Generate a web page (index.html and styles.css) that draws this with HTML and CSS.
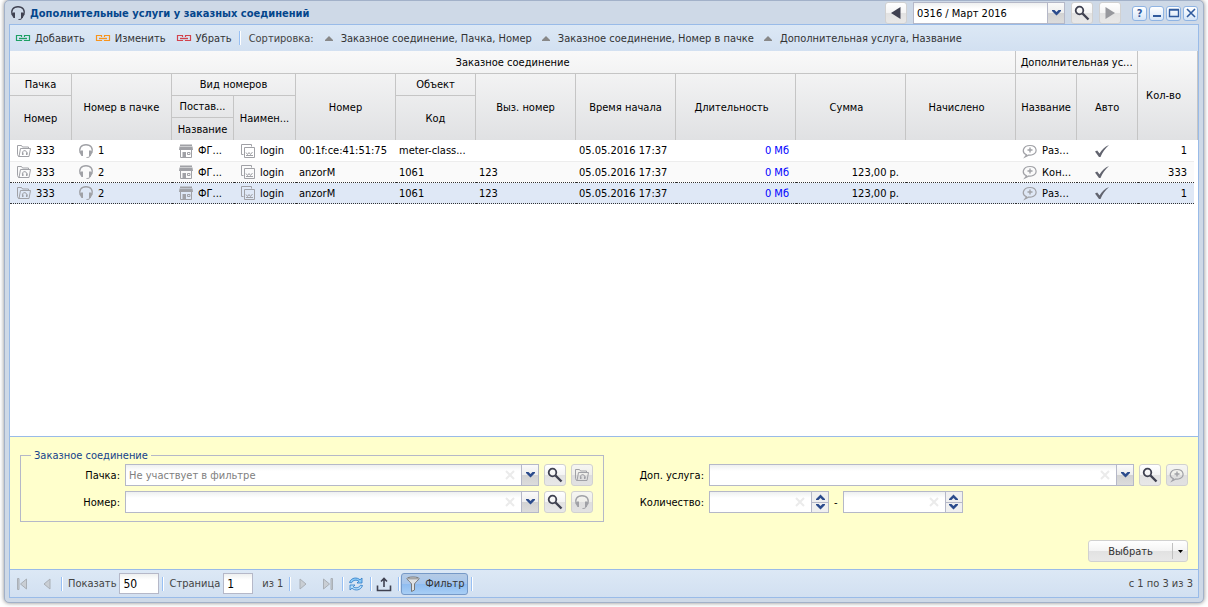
FILE: index.html
```html
<!DOCTYPE html>
<html lang="ru">
<head>
    <meta charset="UTF-8">
    <meta name="viewport" content="width=device-width, initial-scale=1.0">
    <title>Дополнительные услуги у заказных соединений</title>
    <link rel="stylesheet" href="styles.css">
</head>
<body>
    <svg class="sprite" width="0" height="0" aria-hidden="true">
        <symbol id="headset" viewBox="0 0 16 16">
            <path d="M2.500 10C.5 5.500 3 1.800 8 1.800S15.500 5.500 13.500 10" fill="none" stroke="currentColor" stroke-width="1.400"/>
            <path d="M3 7.500h2V13H3.500L1.500 9.500zM13 7.500h-2V13h1.500l2-3.500z" fill="currentColor"/>
            <path d="M12.500 12c-.5 2.200-2 2.500-4 2.500" fill="none" stroke="currentColor"/>
        </symbol>
        <symbol id="folder" viewBox="0 0 16 16">
            <path d="M3 13.500h-.5l-1-2v-9h4l1 1.500h6v1.500M3 13.500h10l1.500-8H4.500z" fill="none" stroke="currentColor"/>
            <path d="M6.500 11C5.500 6.500 11.500 6.500 11 11" fill="none" stroke="currentColor"/>
            <path d="M6 9.500h1.500V12H6zM10 9.500h1.500V12H10z" fill="currentColor"/>
        </symbol>
        <symbol id="shop" viewBox="0 0 16 16">
            <path d="M2 1.500h12V3H2zM1.500 3.500h13l.5 3.500H1z" fill="currentColor"/>
            <path d="M2.500 7v7.500h11V7" fill="none" stroke="currentColor"/>
            <path d="M4.500 9H8v5.500H4.500z" fill="currentColor"/>
            <path d="M9.500 9.500H12v2H9.500z" fill="none" stroke="currentColor"/>
        </symbol>
        <symbol id="pages" viewBox="0 0 16 16">
            <path d="M3.500 11.500h-2v-10h10v2M4.500 4.500h10v10h-10z" fill="none" stroke="currentColor"/>
            <path d="M6 9.500l1.500 2 1.500-2 1.500 2L12.500 9M6 12.500h7" fill="none" stroke="currentColor"/>
        </symbol>
        <symbol id="bubble" viewBox="0 0 16 16">
            <path d="M4.500 11.800C-1 9.500 1 2.500 8 2.500s8.500 7.500 1.500 9.500c-1.500.3-2.500 0-2.500 0L3 14z" fill="none" stroke="currentColor" stroke-width="1.200"/>
            <path d="M8 4.500v5M5.500 7h5" stroke="currentColor" stroke-width="1.400"/>
        </symbol>
        <symbol id="check" viewBox="0 0 16 16">
            <path d="M1 8.500l2.200-1 2.300 3C8 6.500 10.500 4 15 2 11 5.500 8.500 9 6.500 14H5z" fill="currentColor"/>
        </symbol>
        <symbol id="search" viewBox="0 0 16 16">
            <circle cx="5.500" cy="5.500" r="3.800" fill="none" stroke="currentColor" stroke-width="1.800"/>
            <path d="M8.500 8.500l6 6" stroke="currentColor" stroke-width="2.400"/>
        </symbol>
        <symbol id="chain" viewBox="0 0 16 16">
            <path d="M6.500 7V5.500h-5v5h5V10M9.500 7V5.500h5v5h-5V10" fill="none" stroke="currentColor" stroke-width="1.200"/>
            <path d="M4 8.500h8" stroke="currentColor" stroke-width="1.400"/>
        </symbol>
        <symbol id="chevron" viewBox="0 0 9 6">
            <path d="M0 0h2.500l2 2 2-2H9v1L4.500 5.500 0 1z" fill="#2b4b8c"/>
        </symbol>
        <symbol id="sort" viewBox="0 0 8 5">
            <path d="M4 0l4 4v1H0V4z" fill="#888"/>
        </symbol>
        <symbol id="clear" viewBox="0 0 10 10">
            <path d="M1 1l8 8M9 1L1 9" stroke="#ebebeb" stroke-width="2"/>
        </symbol>
        <symbol id="step" viewBox="0 0 16 16">
            <path d="M11 3v10L5 8z" fill="#c9ced4" stroke="#a9afb6"/>
        </symbol>
        <symbol id="edge" viewBox="0 0 16 16">
            <path d="M12.500 3v10L6.500 8zM3.500 2.500h1.500v11H3.500z" fill="#c9ced4" stroke="#a9afb6"/>
        </symbol>
    </svg>

    <main class="window">
        <header class="titlebar">
            <svg class="icon dark"><use href="#headset"/></svg>
            <h1>Дополнительные услуги у заказных соединений</h1>
            <div class="period">
                <button class="btn" aria-label="Предыдущий период"><svg class="icon" viewBox="0 0 16 16"><path d="M12.500 2v12L3 8z" fill="#3f4150"/></svg></button>
                <div class="combo">
                    <input type="text" value="0316 / Март 2016" aria-label="Период">
                    <button class="trigger" aria-label="Открыть список"><svg class="chevron"><use href="#chevron"/></svg></button>
                </div>
                <button class="btn" aria-label="Найти период"><svg class="icon dark"><use href="#search"/></svg></button>
                <button class="btn" aria-label="Следующий период"><svg class="icon" viewBox="0 0 16 16"><path d="M3.500 2v12L13 8z" fill="#97989d"/></svg></button>
            </div>
            <div class="tools">
                <button class="tool" aria-label="Справка">?</button>
                <button class="tool" aria-label="Свернуть"><svg viewBox="0 0 12 12"><path d="M2 8h8v2H2z" fill="#2f5a9d"/></svg></button>
                <button class="tool" aria-label="Развернуть"><svg viewBox="0 0 12 12"><path d="M1.500 3h9v6.500h-9zM1 2.500h10" fill="none" stroke="#2f5a9d" stroke-width="1.400"/></svg></button>
                <button class="tool" aria-label="Закрыть"><svg viewBox="0 0 12 12"><path d="M2 2l8 8M10 2l-8 8" stroke="#2f5a9d" stroke-width="1.600"/></svg></button>
            </div>
        </header>

        <div class="content">
            <div class="toolbar">
                <button class="action"><svg class="icon green"><use href="#chain"/></svg>Добавить</button>
                <button class="action"><svg class="icon orange"><use href="#chain"/></svg>Изменить</button>
                <button class="action"><svg class="icon red"><use href="#chain"/></svg>Убрать</button>
                <span class="sep"></span>
                <span class="caption">Сортировка:</span>
                <button class="sort"><svg><use href="#sort"/></svg>Заказное соединение, Пачка, Номер</button>
                <button class="sort"><svg><use href="#sort"/></svg>Заказное соединение, Номер в пачке</button>
                <button class="sort"><svg><use href="#sort"/></svg>Дополнительная услуга, Название</button>
            </div>

            <div class="grid">
                <table>
                    <colgroup>
                        <col class="w62"><col class="w100"><col class="w62"><col class="w62"><col class="w100"><col class="w80"><col class="w100">
                        <col class="w100"><col class="w120"><col class="w110"><col class="w110"><col class="w61"><col class="w61"><col><col class="w4">
                    </colgroup>
                    <thead>
                        <tr>
                            <th colspan="11">Заказное соединение</th>
                            <th colspan="2">Дополнительная ус...</th>
                            <th class="last" colspan="2" rowspan="4">Кол-во</th>
                        </tr>
                        <tr>
                            <th>Пачка</th>
                            <th rowspan="3">Номер в пачке</th>
                            <th colspan="2">Вид номеров</th>
                            <th rowspan="3">Номер</th>
                            <th>Объект</th>
                            <th rowspan="3">Выз. номер</th>
                            <th rowspan="3">Время начала</th>
                            <th class="near" rowspan="3">Длительность</th>
                            <th class="near" rowspan="3">Сумма</th>
                            <th class="near" rowspan="3">Начислено</th>
                            <th rowspan="3">Название</th>
                            <th rowspan="3">Авто</th>
                        </tr>
                        <tr>
                            <th rowspan="2">Номер</th>
                            <th>Постав...</th>
                            <th rowspan="2">Наимен...</th>
                            <th rowspan="2">Код</th>
                        </tr>
                        <tr>
                            <th>Название</th>
                        </tr>
                    </thead>
                    <tbody>
                        <tr>
                            <td><span class="item"><svg class="icon"><use href="#folder"/></svg>333</span></td>
                            <td><span class="item"><svg class="icon"><use href="#headset"/></svg>1</span></td>
                            <td><span class="item"><svg class="icon"><use href="#shop"/></svg>ФГ...</span></td>
                            <td><span class="item"><svg class="icon"><use href="#pages"/></svg>login</span></td>
                            <td>00:1f:ce:41:51:75</td>
                            <td>meter-class...</td>
                            <td></td>
                            <td>05.05.2016 17:37</td>
                            <td class="num"><a href="#">0 Мб</a></td>
                            <td class="num"></td>
                            <td></td>
                            <td><span class="item"><svg class="icon"><use href="#bubble"/></svg>Раз...</span></td>
                            <td class="auto"><svg class="icon"><use href="#check"/></svg></td>
                            <td class="num">1</td>
                            <td class="filler"></td>
                        </tr>
                        <tr class="alt">
                            <td><span class="item"><svg class="icon"><use href="#folder"/></svg>333</span></td>
                            <td><span class="item"><svg class="icon"><use href="#headset"/></svg>2</span></td>
                            <td><span class="item"><svg class="icon"><use href="#shop"/></svg>ФГ...</span></td>
                            <td><span class="item"><svg class="icon"><use href="#pages"/></svg>login</span></td>
                            <td>anzorM</td>
                            <td>1061</td>
                            <td>123</td>
                            <td>05.05.2016 17:37</td>
                            <td class="num"><a href="#">0 Мб</a></td>
                            <td class="num">123,00 р.</td>
                            <td></td>
                            <td><span class="item"><svg class="icon"><use href="#bubble"/></svg>Кон...</span></td>
                            <td class="auto"><svg class="icon"><use href="#check"/></svg></td>
                            <td class="num">333</td>
                            <td class="filler"></td>
                        </tr>
                        <tr class="selected">
                            <td><span class="item"><svg class="icon"><use href="#folder"/></svg>333</span></td>
                            <td><span class="item"><svg class="icon"><use href="#headset"/></svg>2</span></td>
                            <td><span class="item"><svg class="icon"><use href="#shop"/></svg>ФГ...</span></td>
                            <td><span class="item"><svg class="icon"><use href="#pages"/></svg>login</span></td>
                            <td>anzorM</td>
                            <td>1061</td>
                            <td>123</td>
                            <td>05.05.2016 17:37</td>
                            <td class="num"><a href="#">0 Мб</a></td>
                            <td class="num">123,00 р.</td>
                            <td></td>
                            <td><span class="item"><svg class="icon"><use href="#bubble"/></svg>Раз...</span></td>
                            <td class="auto"><svg class="icon"><use href="#check"/></svg></td>
                            <td class="num">1</td>
                            <td class="filler"></td>
                        </tr>
                    </tbody>
                </table>
            </div>

            <form class="filter">
                <div class="columns">
                    <fieldset>
                        <legend>Заказное соединение</legend>
                        <div class="field">
                            <label for="pack">Пачка:</label>
                            <div class="combo">
                                <input type="text" id="pack" placeholder="Не участвует в фильтре">
                                <svg class="clear"><use href="#clear"/></svg>
                                <button type="button" class="trigger" aria-label="Открыть список"><svg class="chevron"><use href="#chevron"/></svg></button>
                            </div>
                            <button type="button" class="btn" aria-label="Найти"><svg class="icon dark"><use href="#search"/></svg></button>
                            <button type="button" class="btn off" aria-label="Открыть пачку"><svg class="icon"><use href="#folder"/></svg></button>
                        </div>
                        <div class="field">
                            <label for="number">Номер:</label>
                            <div class="combo">
                                <input type="text" id="number">
                                <svg class="clear"><use href="#clear"/></svg>
                                <button type="button" class="trigger" aria-label="Открыть список"><svg class="chevron"><use href="#chevron"/></svg></button>
                            </div>
                            <button type="button" class="btn" aria-label="Найти"><svg class="icon dark"><use href="#search"/></svg></button>
                            <button type="button" class="btn off" aria-label="Открыть номер"><svg class="icon"><use href="#headset"/></svg></button>
                        </div>
                    </fieldset>
                    <div class="side">
                        <div class="field">
                            <label for="service">Доп. услуга:</label>
                            <div class="combo">
                                <input type="text" id="service">
                                <svg class="clear"><use href="#clear"/></svg>
                                <button type="button" class="trigger" aria-label="Открыть список"><svg class="chevron"><use href="#chevron"/></svg></button>
                            </div>
                            <button type="button" class="btn" aria-label="Найти"><svg class="icon dark"><use href="#search"/></svg></button>
                            <button type="button" class="btn off" aria-label="Открыть услугу"><svg class="icon"><use href="#bubble"/></svg></button>
                        </div>
                        <div class="field">
                            <label for="from">Количество:</label>
                            <div class="combo spinner">
                                <input type="text" id="from">
                                <svg class="clear"><use href="#clear"/></svg>
                                <div class="steps">
                                    <button type="button" aria-label="Больше"><svg class="chevron up"><use href="#chevron"/></svg></button>
                                    <button type="button" aria-label="Меньше"><svg class="chevron"><use href="#chevron"/></svg></button>
                                </div>
                            </div>
                            <span>-</span>
                            <div class="combo spinner">
                                <input type="text" aria-label="Количество до">
                                <svg class="clear"><use href="#clear"/></svg>
                                <div class="steps">
                                    <button type="button" aria-label="Больше"><svg class="chevron up"><use href="#chevron"/></svg></button>
                                    <button type="button" aria-label="Меньше"><svg class="chevron"><use href="#chevron"/></svg></button>
                                </div>
                            </div>
                        </div>
                    </div>
                </div>
                <div class="split">
                    <button type="button" class="choose">Выбрать</button>
                    <button type="button" class="more" aria-label="Ещё"><svg viewBox="0 0 5 3"><path d="M0 0h5L2.500 3z"/></svg></button>
                </div>
            </form>

            <footer class="paging">
                <button class="page" aria-label="Первая"><svg class="icon"><use href="#edge"/></svg></button>
                <button class="page" aria-label="Предыдущая"><svg class="icon"><use href="#step"/></svg></button>
                <span class="sep"></span>
                <label for="limit">Показать</label>
                <input class="limit" type="text" id="limit" value="50">
                <span class="sep"></span>
                <label for="page">Страница</label>
                <input class="number" type="text" id="page" value="1">
                <span class="total">из 1</span>
                <span class="sep"></span>
                <button class="page" aria-label="Следующая"><svg class="icon flip"><use href="#step"/></svg></button>
                <button class="page" aria-label="Последняя"><svg class="icon flip"><use href="#edge"/></svg></button>
                <span class="sep"></span>
                <button class="page" aria-label="Обновить">
                    <svg class="icon" viewBox="0 0 16 16">
                        <path d="M1.500 6.500C3 1.500 9 .8 12 3.800L14 2v5H9l1.800-1.800C8.500 3.500 5 4 3.500 6.800z" fill="#8ccaf6" stroke="#2a78c6" stroke-width=".8"/>
                        <path d="M14.500 9.500C13 14.500 7 15.200 4 12.200L2 14V9h5l-1.800 1.800C7.500 12.500 11 12 12.500 9.200z" fill="#b5defa" stroke="#2a78c6" stroke-width=".8"/>
                    </svg>
                </button>
                <span class="sep"></span>
                <button class="page" aria-label="Экспорт">
                    <svg class="icon" viewBox="0 0 16 16"><path d="M1.500 9.500v5h13v-5M8 11V3M5 5.500l3-3 3 3" fill="none" stroke="#3f4150" stroke-width="1.600"/></svg>
                </button>
                <span class="sep"></span>
                <button class="toggle">
                    <svg class="icon" viewBox="0 0 16 16"><path d="M2 2.500c0-2 12-2 12 0C14 4 9.800 6.500 9.500 8v6l-3 1.500V8C6.200 6.500 2 4 2 2.500z" fill="#dfe2e4" stroke="#777"/><path d="M3 2.800h10" stroke="#8a8a8a"/></svg>Фильтр
                </button>
                <span class="sep"></span>
                <span class="range">с 1 по 3 из 3</span>
            </footer>
        </div>
    </main>
</body>
</html>
```
FILE: styles.css
```css
* {
    box-sizing: border-box;
}
body {
    margin: 0;
    padding: 0 4px 4px;
    min-height: 100vh;
    display: flex;
    background: #fff;
    color: #000;
    font-family: "DejaVu Sans Condensed", "Noto Sans", sans-serif;
    font-size: 11px;
    line-height: 13px;
}
button, input {
    font: inherit;
    color: inherit;
    margin: 0;
}
button {
    display: flex;
    align-items: center;
    justify-content: center;
    padding: 0;
    border: 0;
    background: none;
    white-space: nowrap;
}
svg {
    flex: none;
}
.sprite {
    position: absolute;
}
.icon {
    width: 16px;
    height: 16px;
}
.dark {
    color: #3f4150;
}
.green {
    color: #1fa065;
}
.orange {
    color: #f7941d;
}
.red {
    color: #d2434d;
}

/* window */
.window {
    flex: 1;
    min-width: 0;
    display: flex;
    flex-direction: column;
    padding: 0 4px 4px;
    border: 1px solid #a2b1c9;
    border-radius: 5px;
    background: #ced9e7;
    box-shadow: 0 0 4px #888;
}
.titlebar {
    display: flex;
    align-items: center;
    height: 23px;
    padding: 1px 1px 0;
}
h1 {
    flex: 1;
    margin: 0 0 0 4px;
    color: #04468c;
    font-size: 11px;
    font-weight: bold;
}
.period {
    display: flex;
    gap: 6px;
}
.period .combo {
    width: 152px;
}
.tools {
    display: flex;
    gap: 2px;
    margin-left: 11px;
}
.tool {
    width: 15px;
    height: 15px;
    border: 1px solid #8fb4e3;
    border-radius: 3px;
    background: linear-gradient(#fff, #d5e5f8);
    color: #2f5a9d;
    font-weight: bold;
}
.tool svg {
    width: 12px;
    height: 12px;
}
.content {
    flex: 1;
    display: flex;
    flex-direction: column;
    border: 1px solid #99bbe8;
    background: #fff;
}

/* buttons and fields */
.btn {
    flex: none;
    width: 22px;
    height: 22px;
    border: 1px solid #d1d1d1;
    border-radius: 3px;
    background: linear-gradient(#fff, #f4f4f4 50%, #e2e2e2 50%, #e8e8e8);
    color: #3f4150;
}
.btn.off {
    color: #a0a1a6;
    background: linear-gradient(#f6f6f2, #eeeeea 50%, #dedede 50%, #e2e2e2);
}
.combo {
    flex: 1;
    display: flex;
    align-items: center;
    height: 22px;
    border: 1px solid #b5b8c8;
    background: linear-gradient(#eef0f0, #fff 6px);
}
.combo input {
    flex: 1;
    min-width: 0;
    height: 20px;
    padding: 0 3px;
    border: 0;
    background: none;
}
.combo input::placeholder {
    color: #808080;
    opacity: 1;
}
.clear {
    width: 10px;
    height: 10px;
    margin-right: 6px;
}
.trigger {
    width: 17px;
    height: 20px;
    border-left: 1px solid #b5b8c8;
    background: linear-gradient(#fafafa, #eee 50%, #d2d2d2 50%, #dcdcdc);
}
.chevron {
    width: 9px;
    height: 6px;
}
.up {
    transform: rotate(180deg);
}
.spinner {
    flex: none;
    width: 120px;
}
.steps {
    display: flex;
    flex-direction: column;
    width: 17px;
    height: 20px;
    border-left: 1px solid #b5b8c8;
    background: #f0f0f0;
}
.steps button {
    flex: 1;
}
.steps button + button {
    border-top: 1px solid #b5b8c8;
}

/* toolbar */
.toolbar {
    display: flex;
    align-items: center;
    height: 26px;
    padding: 0 5px;
    background: linear-gradient(#dce8f5, #d2e0f1);
    color: #333;
}
.action {
    gap: 4px;
    margin-right: 10px;
}
.sep {
    width: 2px;
    height: 14px;
    border-left: 1px solid #98c0f4;
    border-right: 1px solid #fff;
}
.action + .sep {
    margin-left: -3px;
}
.caption {
    margin: 0 11px 0 8px;
    color: #444;
}
.sort {
    gap: 8px;
    margin-right: 10px;
}
.sort svg {
    width: 8px;
    height: 5px;
}

/* grid */
.grid {
    flex: 1;
}
table {
    width: 100%;
    table-layout: fixed;
    border-spacing: 0;
}
thead {
    background: linear-gradient(#f9f9f9, #e0e1e3);
}
th {
    height: 22px;
    padding: 0;
    border: solid #c5c5c5;
    border-width: 0 1px 1px 0;
    font-weight: normal;
    white-space: nowrap;
}
thead tr:first-child th {
    height: 23px;
}
th[rowspan],
tr:last-child > th {
    border-bottom: 0;
}
th.near {
    padding-right: 8px;
}
thead th.last {
    padding-right: 8px;
}
td {
    height: 21px;
    padding: 0 3px;
    border-bottom: 1px solid #ededed;
    white-space: nowrap;
}
tbody tr:first-child td {
    height: 22px;
}
.item {
    display: flex;
    align-items: center;
    gap: 4px;
    padding-left: 3px;
}
.item .icon {
    color: #a0a1a6;
}
.num {
    padding: 0 7px;
    text-align: right;
}
.num a {
    color: #00f;
    text-decoration: none;
}
.auto {
    padding-right: 15px;
    color: #62646f;
}
.auto .icon {
    display: block;
    margin: 0 auto;
}
.alt td {
    background: #fafafa;
    border-bottom: 1px dotted #333;
}
.selected td {
    background: #dfe8f6;
    border-bottom: 1px dotted #333;
}
tbody .filler {
    padding: 0;
    border: 0;
    background: none;
}
.w4 { width: 4px; }
.w61 { width: 61px; }
.w62 { width: 62px; }
.w80 { width: 80px; }
.w100 { width: 100px; }
.w110 { width: 110px; }
.w120 { width: 120px; }

/* filter */
.filter {
    padding: 12px 10px 7px;
    border-top: 1px solid #99bbe8;
    background: #ffc;
}
.columns {
    display: grid;
    grid-template-columns: 1fr 1fr;
}
fieldset {
    min-width: 0;
    margin: 0;
    padding: 2px 10px 8px;
    border: 1px solid #b5b8c8;
}
legend {
    padding: 0 3px;
    color: #15428b;
}
.field {
    display: flex;
    align-items: center;
    gap: 5px;
}
.field + .field {
    margin-top: 5px;
}
.field label {
    width: 89px;
    text-align: right;
}
.side {
    padding-top: 15px;
}
.side .field label {
    width: 100px;
}
.split {
    display: flex;
    align-items: center;
    width: 100px;
    height: 22px;
    margin: 18px 0 0 auto;
    border: 1px solid #d1d1d1;
    border-radius: 3px;
    background: linear-gradient(#fff, #f4f4f4 50%, #e2e2e2 50%, #e8e8e8);
    color: #333;
}
.choose {
    flex: 1;
    height: 20px;
}
.more {
    width: 15px;
    height: 16px;
    border-left: 1px solid #c0c0c0;
}
.more svg {
    width: 5px;
    height: 3px;
}

/* paging */
.paging {
    display: flex;
    align-items: center;
    height: 28px;
    padding: 0 5px 0 1px;
    border-top: 1px solid #99bbe8;
    background: linear-gradient(#dce8f5, #d2e0f1);
    color: #444;
}
.page {
    width: 22px;
    height: 22px;
    margin-right: 3px;
}
.sep + .page {
    margin-left: 1px;
}
.flip {
    transform: scaleX(-1);
}
.paging label {
    margin: 0 3px 0 5px;
}
.paging input {
    height: 21px;
    padding: 0 3px;
    border: 1px solid #b5b8c8;
    background: linear-gradient(#eef0f0, #fff 6px);
    color: #000;
    font-size: 12px;
}
.limit {
    width: 40px;
    margin-right: 3px;
}
.number {
    width: 30px;
}
.total {
    margin: 0 6px 0 9px;
}
.toggle {
    gap: 4px;
    width: 67px;
    height: 22px;
    margin: 0 3px 0 1px;
    border: 1px solid #7699c7;
    border-radius: 3px;
    background: linear-gradient(#b6cbe4, #a4c5ee 50%, #8ebcf0 50%, #a8cef5);
    color: #333;
}
.range {
    margin-left: auto;
}
```
